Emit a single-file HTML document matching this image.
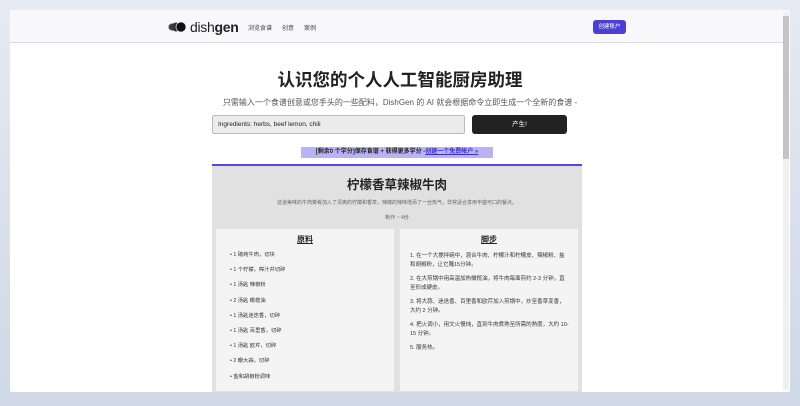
<!DOCTYPE html>
<html><head><meta charset="utf-8"><style>
*{margin:0;padding:0;box-sizing:border-box}
body{width:800px;height:406px;overflow:hidden;background:linear-gradient(#e6eaf2,#cfd8e6);font-family:"Liberation Sans","Noto Sans CJK SC",sans-serif;position:relative}
.win{position:absolute;left:10px;top:10px;width:780px;height:382px;background:#fff;overflow:hidden;border-radius:2px}
.hdr{height:33px;border-bottom:1px solid #ddd;background:#f8f8fa;position:relative}
.logo{position:absolute;left:158px;top:9px;display:flex;align-items:center}
.logo span{font-size:14px;color:#222;letter-spacing:-.3px;margin-left:2px}
.nav{position:absolute;left:238px;top:13px;font-size:6px;color:#444}
.nav b{font-weight:normal;margin-right:10px}
.cbtn{position:absolute;left:583px;top:10px;width:33px;height:14px;background:#4b3fd6;color:#fff;font-size:5.5px;border-radius:3px;text-align:center;line-height:14px}
.sb{position:absolute;right:1px;top:2px;width:6px;height:378px;background:#f0f0f0}
.sb i{position:absolute;left:0;top:4px;width:6px;height:143px;background:#c4c4c4}
h1{position:absolute;left:0;width:780px;top:57px;text-align:center;font-size:17.5px;color:#222;font-weight:bold}
.sub{position:absolute;left:0;width:780px;top:87px;text-align:center;font-size:8px;color:#555}
.inp{position:absolute;left:202px;top:105px;width:253px;height:19px;border:1px solid #bbb;background:#ececec;border-radius:2px;font-size:6.5px;line-height:17px;padding-left:5px;color:#222}
.go{position:absolute;left:462px;top:105px;width:95px;height:19px;background:#222;color:#fff;border-radius:3px;font-size:6.5px;text-align:center;line-height:19px}
.badge{position:absolute;left:291px;top:137px;width:192px;height:11px;background:#b9b2f5;font-size:6px;line-height:11px;text-align:center;color:#222;font-weight:bold}
.badge u{color:#3b32c8}
.card{position:absolute;left:202px;top:154px;width:370px;height:240px;background:#e1e1e1;border-top:2px solid #5448d8}
.card h2{text-align:center;font-size:12.5px;margin-top:8px;color:#222}
.desc{text-align:center;font-size:5px;color:#666;margin-top:6px}
.srv{text-align:center;font-size:5px;color:#666;margin-top:8px}
.col{position:absolute;top:63px;width:178px;height:162px;background:#f4f4f4}
.col h3{text-align:center;font-size:8px;text-decoration:underline;margin-top:5px;color:#222}
.col ul{font-size:5.3px;color:#333;margin-left:14px;margin-top:5px;list-style:none}
.col ul li{height:15.2px}
.col ol{font-size:5.5px;color:#333;margin:7px 8px 0 10px;list-style:none;line-height:8.5px}
.col ol li{margin-bottom:6px}
</style></head><body>
<div class="win">
<div class="hdr">
<div class="logo"><svg width="20" height="12" viewBox="0 0 20 12"><circle cx="4" cy="6" r="3.5" fill="#444"/><circle cx="8" cy="6" r="4.5" fill="#333"/><circle cx="13" cy="6" r="5" fill="#111" stroke="#fff" stroke-width=".6"/></svg><span>dish<b>gen</b></span></div>
<div class="nav"><b>浏览食谱</b><b>创意</b><b>案例</b></div>
<div class="cbtn">创建账户</div>
</div>
<h1>认识您的个人人工智能厨房助理</h1>
<div class="sub">只需输入一个食谱创意或您手头的一些配料，DishGen 的 AI 就会根据命令立即生成一个全新的食谱 -</div>
<div class="inp">Ingredients: herbs, beef lemon, chili</div>
<div class="go">产生!</div>
<div class="badge">[剩余0 个学分]保存食谱 + 获得更多学分 -<u>创建一个免费帐户 »</u></div>
<div class="card">
<h2>柠檬香草辣椒牛肉</h2>
<div class="desc">这道美味的牛肉菜肴加入了清爽的柠檬和香草，辣椒的辣味增添了一丝热气，非常适合享用丰盛可口的餐点。</div>
<div class="srv">制作 ~ 4份</div>
<div class="col" style="left:4px"><h3>原料</h3><ul>
<li>• 1 磅炖牛肉，切块</li><li>• 1 个柠檬，榨汁并切碎</li><li>• 1 汤匙 辣椒粉</li><li>• 2 汤匙 橄榄油</li><li>• 1 汤匙迷迭香，切碎</li><li>• 1 汤匙 百里香，切碎</li><li>• 1 汤匙 欧芹，切碎</li><li>• 2 瓣大蒜，切碎</li><li>• 盐和胡椒粉调味</li></ul></div>
<div class="col" style="left:188px"><h3>脚步</h3><ol>
<li>1. 在一个大搅拌碗中，混合牛肉、柠檬汁和柠檬皮、辣椒粉、盐和胡椒粉，让它腌15分钟。</li>
<li>2. 在大煎锅中用高温加热橄榄油，将牛肉每面煎约 2-3 分钟，直至形成硬皮。</li>
<li>3. 将大蒜、迷迭香、百里香和欧芹加入煎锅中，炒至香草变香，大约 2 分钟。</li>
<li>4. 把火调小，用文火慢炖，直到牛肉煮熟至所需的熟度，大约 10-15 分钟。</li>
<li>5. 服务热。</li></ol></div>
</div>
<div class="sb"><i></i></div>
</div>
</body></html>
